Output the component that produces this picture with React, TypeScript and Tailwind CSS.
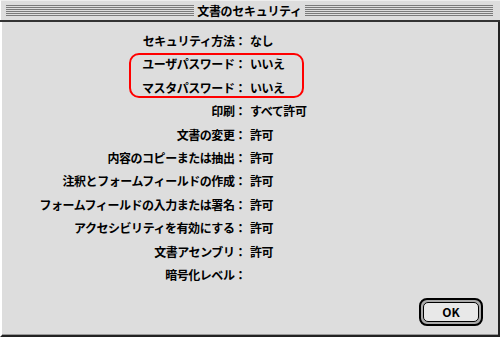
import React from "react";

const rows: [string, string][] = [
  ["セキュリティ方法：", "なし"],
  ["ユーザパスワード：", "いいえ"],
  ["マスタパスワード：", "いいえ"],
  ["印刷：", "すべて許可"],
  ["文書の変更：", "許可"],
  ["内容のコピーまたは抽出：", "許可"],
  ["注釈とフォームフィールドの作成：", "許可"],
  ["フォームフィールドの入力または署名：", "許可"],
  ["アクセシビリティを有効にする：", "許可"],
  ["文書アセンブリ：", "許可"],
  ["暗号化レベル：", ""],
];

function Stripes() {
  return (
    <div className="flex-1 flex flex-col gap-[1px]">
      <div className="h-[1px] bg-[#7a7a7a]" />
      <div className="h-[1px] bg-[#7a7a7a]" />
      <div className="h-[1px] bg-[#7a7a7a]" />
      <div className="h-[1px] bg-[#7a7a7a]" />
      <div className="h-[1px] bg-[#7a7a7a]" />
      <div className="h-[1px] bg-[#7a7a7a]" />
    </div>
  );
}

export default function App() {
  return (
    <div
      className="relative w-[500px] h-[337px] bg-[#dddddd] text-black flex flex-col overflow-hidden"
      style={{ fontFamily: '"Noto Sans CJK JP", "Noto Sans", sans-serif' }}
    >
      {/* title bar */}
      <div className="h-[20px] flex items-center pl-[5px] pr-[7px] bg-[#dddddd] border-l border-white border-t border-t-[#eeeeee]">
        <Stripes />
        <div className="px-[3px] text-[12px] font-bold leading-[20px] whitespace-nowrap tracking-[-0.3px]">
          文書のセキュリティ
        </div>
        <Stripes />
      </div>
      <div className="h-[2px] bg-[#333333]" />
      {/* content */}
      <div className="flex-1 flex flex-col border-l-2 border-l-white border-r-2 border-r-[#222222] border-b-2 border-b-[#222222]">
        <div className="flex-1 flex flex-col pt-[7px] border-b border-b-[#999999]">
          {rows.map(([label, value], i) => (
            <div key={i} className="flex h-[23.4px] items-center text-[12px] font-bold leading-[23.4px] whitespace-nowrap tracking-[-0.45px]">
              <div className="w-[244px] text-right">{label}</div>
              <div className="pl-[4px]">{value}</div>
            </div>
          ))}
          <div className="flex justify-end pr-[15px] mt-[12px]">
            <div className="w-[64px] h-[28px] rounded-[8px] border-2 border-black bg-[#aaaaaa] p-[2px]">
              <div className="w-full h-full rounded-[5px] border border-black bg-[#e8e8e8] flex items-center justify-center text-[12px] font-bold leading-none">
                OK
              </div>
            </div>
          </div>
        </div>
      </div>
      {/* annotation */}
      <div className="absolute left-[129px] top-[53px] w-[175px] h-[45px] border-2 border-[#ff0000] rounded-[10px]" />
    </div>
  );
}
